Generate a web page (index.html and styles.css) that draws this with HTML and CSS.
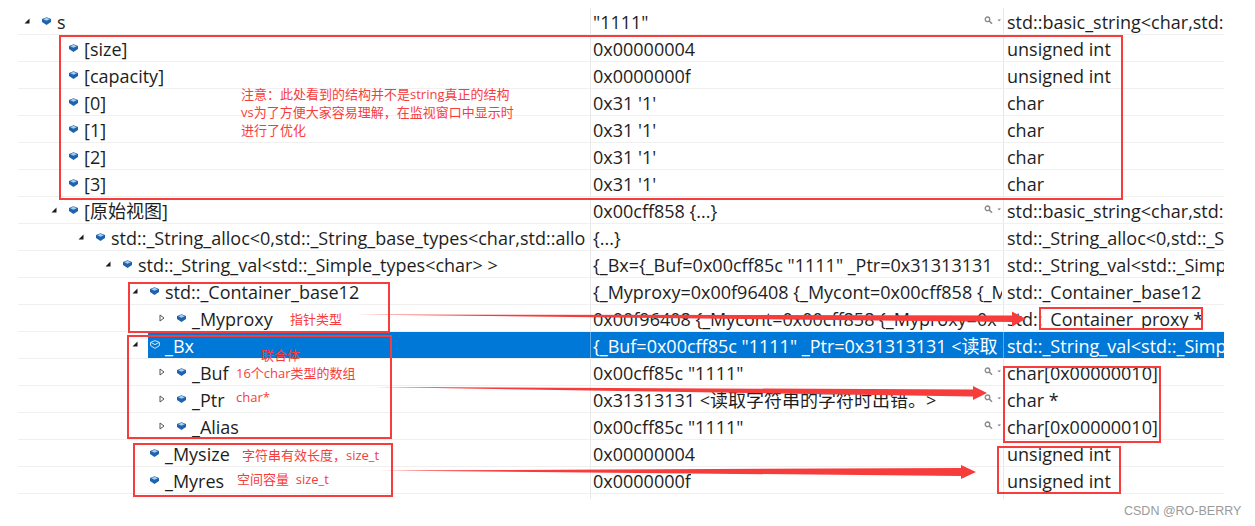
FILE: index.html
```html
<!DOCTYPE html>
<html lang="zh-CN">
<head>
<meta charset="utf-8">
<title>Watch window</title>
<link rel="stylesheet" href="styles.css">
</head>
<body>
<svg width="0" height="0" class="defs">
  <symbol id="cube" viewBox="0 0 9 8">
    <path d="M4.5 .2 9 2V5L4.5 8 0 5V2Z" fill="#1e63ad"/>
    <path d="M4.5 .8 7.8 2.2 4.5 3.7 1.2 2.2Z" fill="#a9cdec"/>
  </symbol>
  <symbol id="cube-sel" viewBox="0 0 10 9">
    <path d="M5 .6 9.4 2.4V5.6L5 8.4 .6 5.6V2.4Z" fill="none" stroke="#d5e8f8"/>
    <path d="M1.2 2.6 5 4.6 8.8 2.6" fill="none" stroke="#d5e8f8"/>
  </symbol>
  <symbol id="open" viewBox="0 0 8 10"><path d="M6.5 2.5V7.5H1.5Z" fill="#1a1a1a"/></symbol>
  <symbol id="closed" viewBox="0 0 8 10"><path d="M2 2 6 5 2 8Z" fill="#fff" stroke="#555"/></symbol>
  <symbol id="lens" viewBox="0 0 18 9">
    <circle cx="3.5" cy="3.3" r="2.3" fill="none" stroke="#8a8a8a" stroke-width="1.3"/>
    <path d="M5.2 5 8 7.8" stroke="#8a8a8a" stroke-width="1.6"/>
    <path d="M13.5 3.5H17L15.2 5.3Z" fill="#777"/>
  </symbol>
</svg>

<main class="watch">
  <div class="row">
    <div class="name l0"><svg class="tw"><use href="#open"/></svg><svg class="ic"><use href="#cube"/></svg><span>s</span></div>
    <div class="value"><span class="vt">"1111"</span><svg class="lens"><use href="#lens"/></svg></div>
    <div class="type">std::basic_string&lt;char,std:</div>
  </div>
  <div class="row">
    <div class="name l1"><span class="tw"></span><svg class="ic"><use href="#cube"/></svg><span>[size]</span></div>
    <div class="value"><span class="vt">0x00000004</span></div><div class="type">unsigned int</div>
  </div>
  <div class="row">
    <div class="name l1"><span class="tw"></span><svg class="ic"><use href="#cube"/></svg><span>[capacity]</span></div>
    <div class="value"><span class="vt">0x0000000f</span></div><div class="type">unsigned int</div>
  </div>
  <div class="row">
    <div class="name l1"><span class="tw"></span><svg class="ic"><use href="#cube"/></svg><span>[0]</span></div>
    <div class="value"><span class="vt">0x31 '1'</span></div><div class="type">char</div>
  </div>
  <div class="row">
    <div class="name l1"><span class="tw"></span><svg class="ic"><use href="#cube"/></svg><span>[1]</span></div>
    <div class="value"><span class="vt">0x31 '1'</span></div><div class="type">char</div>
  </div>
  <div class="row">
    <div class="name l1"><span class="tw"></span><svg class="ic"><use href="#cube"/></svg><span>[2]</span></div>
    <div class="value"><span class="vt">0x31 '1'</span></div><div class="type">char</div>
  </div>
  <div class="row">
    <div class="name l1"><span class="tw"></span><svg class="ic"><use href="#cube"/></svg><span>[3]</span></div>
    <div class="value"><span class="vt">0x31 '1'</span></div><div class="type">char</div>
  </div>
  <div class="row">
    <div class="name l1"><svg class="tw"><use href="#open"/></svg><svg class="ic"><use href="#cube"/></svg><span>[原始视图]</span></div>
    <div class="value"><span class="vt">0x00cff858 {...}</span><svg class="lens"><use href="#lens"/></svg></div>
    <div class="type">std::basic_string&lt;char,std:</div>
  </div>
  <div class="row">
    <div class="name l2"><svg class="tw"><use href="#open"/></svg><svg class="ic"><use href="#cube"/></svg><span>std::_String_alloc&lt;0,std::_String_base_types&lt;char,std::allo</span></div>
    <div class="value"><span class="vt">{...}</span></div>
    <div class="type">std::_String_alloc&lt;0,std::_S</div>
  </div>
  <div class="row">
    <div class="name l3"><svg class="tw"><use href="#open"/></svg><svg class="ic"><use href="#cube"/></svg><span>std::_String_val&lt;std::_Simple_types&lt;char&gt; &gt;</span></div>
    <div class="value"><span class="vt">{_Bx={_Buf=0x00cff85c "1111" _Ptr=0x31313131</span></div>
    <div class="type">std::_String_val&lt;std::_Simp</div>
  </div>
  <div class="row">
    <div class="name l4"><svg class="tw"><use href="#open"/></svg><svg class="ic"><use href="#cube"/></svg><span>std::_Container_base12</span></div>
    <div class="value"><span class="vt">{_Myproxy=0x00f96408 {_Mycont=0x00cff858 {_M</span></div>
    <div class="type">std::_Container_base12</div>
  </div>
  <div class="row">
    <div class="name l5"><svg class="tw"><use href="#closed"/></svg><svg class="ic"><use href="#cube"/></svg><span>_Myproxy</span></div>
    <div class="value"><span class="vt">0x00f96408 {_Mycont=0x00cff858 {_Myproxy=0x</span></div>
    <div class="type">std::_Container_proxy *</div>
  </div>
  <div class="row selected">
    <div class="name l4"><svg class="tw"><use href="#open"/></svg><div class="sel-bar"><svg class="ic"><use href="#cube-sel"/></svg><span>_Bx</span></div></div>
    <div class="value"><span class="vt">{_Buf=0x00cff85c "1111" _Ptr=0x31313131 &lt;读取</span></div>
    <div class="type">std::_String_val&lt;std::_Simp</div>
  </div>
  <div class="row">
    <div class="name l5"><svg class="tw"><use href="#closed"/></svg><svg class="ic"><use href="#cube"/></svg><span>_Buf</span></div>
    <div class="value"><span class="vt">0x00cff85c "1111"</span><svg class="lens"><use href="#lens"/></svg></div>
    <div class="type">char[0x00000010]</div>
  </div>
  <div class="row">
    <div class="name l5"><svg class="tw"><use href="#closed"/></svg><svg class="ic"><use href="#cube"/></svg><span>_Ptr</span></div>
    <div class="value"><span class="vt">0x31313131 &lt;读取字符串的字符时出错。&gt;</span><svg class="lens"><use href="#lens"/></svg></div>
    <div class="type">char *</div>
  </div>
  <div class="row">
    <div class="name l5"><svg class="tw"><use href="#closed"/></svg><svg class="ic"><use href="#cube"/></svg><span>_Alias</span></div>
    <div class="value"><span class="vt">0x00cff85c "1111"</span><svg class="lens"><use href="#lens"/></svg></div>
    <div class="type">char[0x00000010]</div>
  </div>
  <div class="row">
    <div class="name l4"><span class="tw"></span><svg class="ic"><use href="#cube"/></svg><span>_Mysize</span></div>
    <div class="value"><span class="vt">0x00000004</span></div><div class="type">unsigned int</div>
  </div>
  <div class="row">
    <div class="name l4"><span class="tw"></span><svg class="ic"><use href="#cube"/></svg><span>_Myres</span></div>
    <div class="value"><span class="vt">0x0000000f</span></div><div class="type">unsigned int</div>
  </div>
  <div class="tail"><div class="tail-name"></div><div class="tail-value"></div></div>
</main>

<svg class="arrows" width="1255" height="526" viewBox="0 0 1255 526">
  <path d="M355 314.5 1012 315.5V311.5L1026 319 1012 326.5V322Z" fill="#f73c3c"/>
  <path d="M374 387 973 389.5V386L987 393 973 400V396.5Z" fill="#f73c3c"/>
  <path d="M380 470.5 961 468V465L976 472 961 479V476Z" fill="#f73c3c"/>
</svg>

<div class="box box-a"></div>
<div class="box box-b"></div>
<div class="box box-c"></div>
<div class="box box-d"></div>
<div class="box box-e"></div>
<div class="box box-f"></div>
<div class="box box-g"></div>

<div class="note note-main">注意：此处看到的结构并不是string真正的结构<br>vs为了方便大家容易理解，在监视窗口中显示时<br>进行了优化</div>
<div class="note note-ptr">指针类型</div>
<div class="note note-union">联合体</div>
<div class="note note-buf">16个char类型的数组</div>
<div class="note note-char">char*</div>
<div class="note note-size">字符串有效长度，size_t</div>
<div class="note note-cap">空间容量&nbsp; size_t</div>
<div class="watermark">CSDN @RO-BERRY</div>
</body>
</html>
```
FILE: styles.css
```css
html, body {
  margin: 0;
  padding: 0;
  background: #fff;
}
body {
  width: 1255px;
  height: 526px;
  overflow: hidden;
  position: relative;
  font-family: "Open Sans", "Noto Sans CJK SC", sans-serif;
  color: #1e1e1e;
}
.defs { position: absolute; }

.watch {
  display: flex;
  flex-direction: column;
  width: 1206px;
  margin-left: 18px;
  padding-top: 8px;
  font-size: 18px;
}
.row {
  display: grid;
  grid-template-columns: 572px 413px 221px;
  height: 27px;
  box-sizing: border-box;
  border-bottom: 1px solid #f0f0f0;
  line-height: 24px;
  white-space: nowrap;
}
.name, .value, .type {
  overflow: hidden;
  height: 26px;
  box-sizing: border-box;
  padding-top: 2px;
}
.name {
  display: flex;
  align-items: center;
}
.value {
  display: flex;
  align-items: center;
  justify-content: space-between;
  padding-left: 2px;
  padding-right: 1px;
  border-left: 1px solid #e8e8e8;
}
.vt { overflow: hidden; }
.type {
  padding-left: 3px;
  border-left: 1px solid #e8e8e8;
}
.l0 { padding-left: 5px; }
.l1 { padding-left: 32px; }
.l2 { padding-left: 59px; }
.l3 { padding-left: 86px; }
.l4 { padding-left: 113px; }
.l5 { padding-left: 140px; }

.tw {
  width: 8px;
  height: 10px;
  flex: none;
  margin-right: 11px;
  margin-top: -3px;
}
.ic {
  width: 9px;
  height: 8px;
  flex: none;
  margin-right: 6px;
  margin-top: -3px;
}
.lens {
  width: 18px;
  height: 9px;
  flex: none;
  margin-top: -3px;
}

.selected {
  color: #fff;
}
.selected .value,
.selected .type {
  background: #0078d7;
  border-left-color: #5fa9e6;
}
.selected .tw { margin-right: 9px; }
.selected .name { padding-top: 0; }
.sel-bar {
  display: flex;
  align-items: center;
  flex: 1;
  height: 26px;
  padding: 2px 0 0 2px;
  box-sizing: border-box;
  background: #0078d7;
}
.sel-bar .ic { width: 10px; height: 9px; margin-right: 5px; }

.tail { display: flex; height: 5px; }
.tail-name { width: 572px; }
.tail-value { width: 414px; border-left: 1px solid #e8e8e8; border-right: 1px solid #e8e8e8; box-sizing: border-box; }

.arrows {
  position: absolute;
  left: 0;
  top: 0;
}
.box {
  position: absolute;
  box-sizing: border-box;
  border: 2px solid #f73c3c;
}
.box-a { left: 59px; top: 35px; width: 1064px; height: 165px; }
.box-b { left: 128px; top: 282px; width: 262px; height: 51px; }
.box-c { left: 127px; top: 335px; width: 265px; height: 104px; }
.box-d { left: 133px; top: 443px; width: 260px; height: 54px; }
.box-e { left: 1039px; top: 307px; width: 164px; height: 23px; }
.box-f { left: 1003px; top: 366px; width: 158px; height: 77px; }
.box-g { left: 997px; top: 446px; width: 124px; height: 48px; }

.note {
  position: absolute;
  font-family: "Open Sans", "Noto Sans CJK SC", sans-serif;
  font-size: 13px;
  line-height: 18px;
  color: #f73c3c;
  white-space: nowrap;
}
.note-main { left: 241px; top: 85px; }
.note-ptr { left: 290px; top: 310px; }
.note-union { left: 261px; top: 346px; }
.note-buf { left: 236px; top: 364px; }
.note-char { left: 236px; top: 388px; }
.note-size { left: 242px; top: 446px; }
.note-cap { left: 237px; top: 470px; }

.watermark {
  position: absolute;
  left: 1124px;
  top: 503px;
  font-family: "Liberation Sans", sans-serif;
  font-size: 12.5px;
  line-height: 16px;
  color: #9a9a9a;
  white-space: nowrap;
}
```
